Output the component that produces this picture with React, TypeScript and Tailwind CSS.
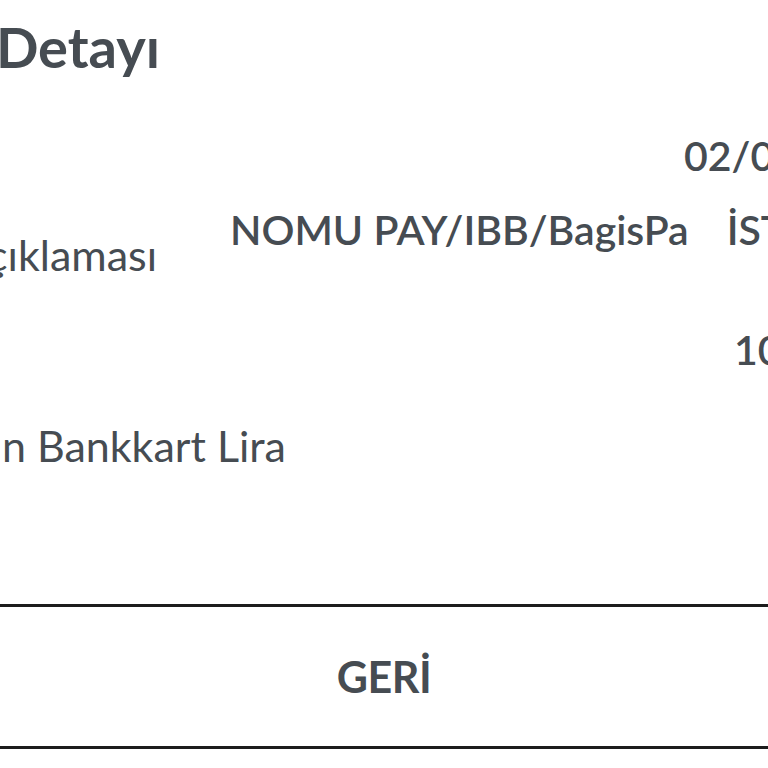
export default function App() {
  return (
    <div className="w-[768px] h-[768px] bg-white overflow-hidden text-[#464c52] font-[Lato,'Open_Sans',sans-serif] flex flex-col">
      {/* Title */}
      <div className="pt-[19px] h-[120px] shrink-0 flex">
        <div className="flex justify-end w-[160px] shrink-0">
          <span className="shrink-0 whitespace-nowrap text-[56px] leading-none font-bold">İşlem Detayı</span>
        </div>
      </div>

      {/* Date row */}
      <div className="h-[88px] shrink-0 flex pt-[15px]">
        <div className="pl-[684px] shrink-0 whitespace-nowrap text-[41px] leading-none font-semibold">02/03/2024</div>
      </div>

      {/* Description row */}
      <div className="h-[121px] shrink-0 flex items-start">
        <div className="flex justify-end w-[157px] shrink-0 mt-[25px]">
          <span className="shrink-0 whitespace-nowrap text-[43px] leading-none">İşlem Açıklaması</span>
        </div>
        <div className="ml-[73px] mt-[1px] flex gap-[38px] shrink-0 whitespace-nowrap text-[41px] leading-none font-semibold">
          <span>NOMU PAY/IBB/BagisPa</span>
          <span>İSTANBUL</span>
        </div>
      </div>

      {/* Amount row */}
      <div className="h-[95px] shrink-0 flex">
        <div className="pl-[734px] shrink-0 whitespace-nowrap text-[41px] leading-none font-semibold">100,00 TL</div>
      </div>

      {/* Bankkart row */}
      <div className="h-[180px] shrink-0 flex items-start">
        <div className="flex justify-end w-[286px] shrink-0">
          <span className="shrink-0 whitespace-nowrap text-[43px] leading-none">Kazanılan Bankkart Lira</span>
        </div>
      </div>

      {/* Back button */}
      <div className="h-[145px] shrink-0 border-y-[3px] border-[#1c1c1c] flex items-center justify-center">
        <span className="text-[43px] leading-none font-bold tracking-[-0.5px]">GERİ</span>
      </div>
      <div className="flex-1" />
    </div>
  );
}
